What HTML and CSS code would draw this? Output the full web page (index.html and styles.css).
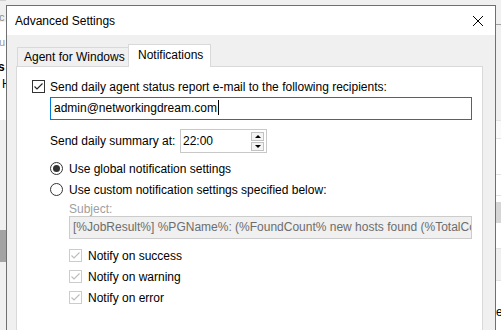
FILE: index.html
```html
<!DOCTYPE html>
<html lang="en">
<head>
    <meta charset="UTF-8">
    <title>Advanced Settings</title>
    <link rel="stylesheet" href="styles.css">
</head>
<body>
    <div class="screen">
        <!-- window behind, left edge -->
        <div class="bg-left">
            <div class="bl-top"><span class="bl-oc">oc</span></div>
            <div class="bl-white">
                <span class="bl-ou">ou</span>
                <span class="bl-s">s</span>
                <span class="bl-h">H</span>
            </div>
            <div class="bl-gray"></div>
            <div class="bl-dark"></div>
            <div class="bl-rest"></div>
        </div>

        <div class="dialog">
            <div class="titlebar">
                <span class="title">Advanced Settings</span>
                <svg class="close" width="12" height="12" viewBox="0 0 12 12">
                    <path d="M1 1L11 11M11 1L1 11" stroke="#000" stroke-width="1" fill="none"/>
                </svg>
            </div>
            <div class="dlg-body">
                <div class="tabs">
                    <div class="tab">Agent for Windows</div>
                    <div class="tab active">Notifications</div>
                </div>
                <div class="panel">
                    <div class="row">
                        <span class="chk">
                            <svg width="11" height="11" viewBox="0 0 11 11"><path d="M1.5 5.5L4 8L9.5 2.5" stroke="#222" stroke-width="1.1" fill="none"/></svg>
                        </span>
                        <span>Send daily agent status report e-mail to the following recipients:</span>
                    </div>
                    <div class="email">admin@networkingdream.com<span class="caret"></span></div>

                    <div class="summary">
                        <span class="summary-label">Send daily summary at:</span>
                        <div class="spin">
                            <span class="spin-value">22:00</span>
                            <div class="spin-btns">
                                <div class="spin-btn"><span class="tri-up"></span></div>
                                <div class="spin-btn"><span class="tri-down"></span></div>
                            </div>
                        </div>
                    </div>

                    <div class="row radio-row first">
                        <span class="radio checked"></span>
                        <span>Use global notification settings</span>
                    </div>
                    <div class="row radio-row">
                        <span class="radio"></span>
                        <span>Use custom notification settings specified below:</span>
                    </div>

                    <div class="subject-label">Subject:</div>
                    <div class="subject">[%JobResult%] %PGName%: (%FoundCount% new hosts found (%TotalCount% total hosts)</div>

                    <div class="row sub-row first">
                        <span class="chk disabled">
                            <svg width="11" height="11" viewBox="0 0 11 11"><path d="M1.5 5.5L4 8L9.5 2.5" stroke="#bcbcbc" stroke-width="1.1" fill="none"/></svg>
                        </span>
                        <span>Notify on success</span>
                    </div>
                    <div class="row sub-row">
                        <span class="chk disabled">
                            <svg width="11" height="11" viewBox="0 0 11 11"><path d="M1.5 5.5L4 8L9.5 2.5" stroke="#bcbcbc" stroke-width="1.1" fill="none"/></svg>
                        </span>
                        <span>Notify on warning</span>
                    </div>
                    <div class="row sub-row">
                        <span class="chk disabled">
                            <svg width="11" height="11" viewBox="0 0 11 11"><path d="M1.5 5.5L4 8L9.5 2.5" stroke="#bcbcbc" stroke-width="1.1" fill="none"/></svg>
                        </span>
                        <span>Notify on error</span>
                    </div>
                </div>
            </div>
        </div>

        <!-- window behind, right edge -->
        <div class="bg-right">
            <div class="br-a"></div>
            <div class="br-b"></div>
            <div class="br-c"></div>
            <div class="br-d"></div>
            <div class="br-e"></div>
            <div class="br-f"></div>
            <div class="br-g"></div>
            <div class="br-h"></div>
            <div class="br-i"><span>e</span></div>
        </div>
    </div>
</body>
</html>
```

FILE: styles.css
```css
body {
    margin: 0;
    width: 501px;
    height: 330px;
    overflow: hidden;
    background: #f0f0f0;
    font-family: "Liberation Sans", Arial, sans-serif;
    font-size: 12px;
    color: #000;
}
.screen {
    display: grid;
    grid-template-columns: 6px 490px 5px;
    height: 330px;
    overflow: hidden;
}

/* background window fragments */
.bg-left {
    display: flex;
    flex-direction: column;
    overflow: hidden;
    white-space: nowrap;
}
.bl-top {
    height: 22px;
    background: #f0f0f0;
    position: relative;
    border-top: 1px solid #d0d0d0;
    box-sizing: border-box;
}
.bl-white {
    height: 98px;
    background: #fff;
    position: relative;
}
.bl-oc,
.bl-ou,
.bl-s,
.bl-h {
    position: absolute;
    line-height: 12px;
}
.bl-oc { top: 10px; left: -7px; color: #8a8a8a; font-size: 11px; }
.bl-ou { top: 14px; left: -7px; color: #9a9a9a; font-size: 11px; }
.bl-s { top: 39px; left: -2px; font-weight: bold; }
.bl-h { top: 56px; left: 2px; }
.bl-gray { height: 110px; background: #f0f0f0; }
.bl-dark { height: 32px; background: #a3a3a3; }
.bl-rest { flex: 1; background: #f0f0f0; }

.bg-right {
    display: flex;
    flex-direction: column;
    overflow: hidden;
}
.br-a { height: 24px; border-bottom: 1px solid #a0a0a0; }
.br-b { height: 95px; background: #f0f0f0; }
.br-c { height: 17px; background: #fafafa; border-top: 1px solid #e3e3e3; border-bottom: 1px solid #e3e3e3; }
.br-d { height: 35px; background: #fff; border-bottom: 1px solid #e3e3e3; }
.br-e { height: 20px; background: #fff; border-bottom: 1px solid #e3e3e3; }
.br-f { height: 6px; background: #fff; }
.br-g { height: 21px; background: #d6d6d6; }
.br-h { height: 25px; background: #fff; border-bottom: 1px solid #e3e3e3; }
.br-i { flex: 1; background: #fff; border-top: 1px solid #e3e3e3; margin-top: 31px; position: relative; }
.br-i span { position: absolute; left: 0; top: 24px; font-size: 12px; }

/* dialog */
.dialog {
    margin-top: 5px;
    border: 1px solid #707070;
    border-bottom: none;
    background: #f0f0f0;
    display: flex;
    flex-direction: column;
}
.titlebar {
    height: 29px;
    background: #fff;
    display: flex;
    align-items: center;
    justify-content: space-between;
    padding: 0 11px 0 8px;
}
.title {
    font-size: 12px;
}
.close {
    display: block;
}
.dlg-body {
    flex: 1;
    padding: 10px 12px 0 9px;
}
.tabs {
    display: flex;
    align-items: flex-end;
    margin-left: 1px;
    height: 21px;
}
.tab {
    height: 18px;
    padding: 0 0 0 6px;
    border: 1px solid #d9d9d9;
    border-bottom: none;
    background: #f0f0f0;
    line-height: 19px;
    white-space: nowrap;
    box-sizing: content-box;
}
.tab:first-child {
    width: 104px;
}
.tab.active {
    height: 22px;
    width: 72px;
    margin-bottom: -1px;
    margin-left: -1px;
    background: #fff;
    line-height: 20px;
    padding-left: 9px;
    position: relative;
    z-index: 1;
}
.panel {
    background: #fff;
    border: 1px solid #d9d9d9;
    height: 300px;
    padding: 13px 11px 0 15px;
}

.row {
    display: flex;
    align-items: center;
    height: 13px;
    gap: 5px;
    white-space: nowrap;
}
.chk {
    width: 13px;
    height: 13px;
    box-sizing: border-box;
    border: 1px solid #333;
    background: #fff;
    display: flex;
    align-items: center;
    justify-content: center;
    flex: none;
}
.chk svg {
    display: block;
}
.chk.disabled {
    border-color: #cccccc;
}

.email {
    margin: 4px 0 0 18px;
    width: 422px;
    height: 23px;
    box-sizing: border-box;
    border: 1px solid #0078d7;
    padding-left: 3px;
    line-height: 21px;
}
.caret {
    display: inline-block;
    width: 1px;
    height: 15px;
    background: #000;
    vertical-align: -3px;
    margin-left: 1px;
}

.summary {
    display: flex;
    align-items: center;
    margin: 9px 0 0 18px;
    height: 24px;
}
.summary-label {
    width: 130px;
}
.spin {
    width: 87px;
    height: 24px;
    box-sizing: border-box;
    border: 1px solid #c8c8c8;
    display: flex;
    align-items: center;
    justify-content: space-between;
    padding: 0 2px 0 2px;
}
.spin-btns {
    display: flex;
    flex-direction: column;
}
.spin-btn {
    width: 13px;
    height: 9px;
    box-sizing: border-box;
    border: 1px solid #c2c2c2;
    background: #f4f4f4;
    display: flex;
    align-items: center;
    justify-content: center;
}
.spin-btn + .spin-btn {
    margin-top: 1px;
}
.tri-up {
    width: 0;
    height: 0;
    border-left: 3px solid transparent;
    border-right: 3px solid transparent;
    border-bottom: 3px solid #000;
}
.tri-down {
    width: 0;
    height: 0;
    border-left: 3px solid transparent;
    border-right: 3px solid transparent;
    border-top: 3px solid #000;
}

.radio-row {
    margin-left: 18px;
    margin-top: 8px;
    gap: 6px;
}
.radio-row.first {
    margin-top: 9px;
}
.radio {
    width: 13px;
    height: 13px;
    box-sizing: border-box;
    border: 1px solid #333;
    border-radius: 50%;
    display: flex;
    align-items: center;
    justify-content: center;
    flex: none;
}
.radio.checked::after {
    content: "";
    width: 7px;
    height: 7px;
    border-radius: 50%;
    background: #333;
}

.subject-label {
    margin: 6px 0 0 37px;
    height: 14px;
    line-height: 14px;
    color: #a0a0a0;
}
.subject {
    margin-left: 37px;
    width: 403px;
    height: 23px;
    box-sizing: border-box;
    border: 1px solid #cccccc;
    background: #f0f0f0;
    color: #6d6d6d;
    padding-left: 3px;
    line-height: 21px;
    white-space: nowrap;
    overflow: hidden;
}

.sub-row {
    margin-left: 37px;
    margin-top: 8px;
    gap: 6px;
}
.sub-row.first {
    margin-top: 10px;
}
```
